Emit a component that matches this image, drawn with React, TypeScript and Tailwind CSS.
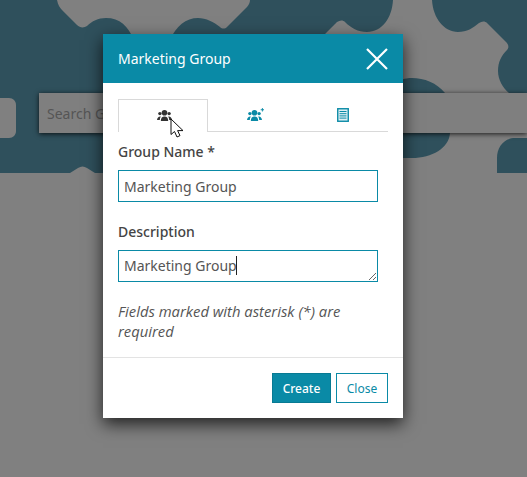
const font = { fontFamily: '"Noto Sans", "Open Sans", sans-serif' };

function Users({ color, plus }: { color: string; plus?: boolean }) {
  return (
    <svg width="18" height="14" viewBox="0 0 18 14" fill={color} className="block ml-[4px]">
      <circle cx="8.5" cy="4.8" r="2.8" />
      <circle cx="3.9" cy="5.6" r="1.7" />
      <circle cx="13.1" cy="5.6" r="1.7" />
      <path d="M1 12 C1.3 9.6 2.4 8.4 4.2 8.4 L4.8 8.4 C4.1 9.4 3.8 10.6 3.8 12 Z" />
      <path d="M16 12 C15.7 9.6 14.6 8.4 12.8 8.4 L12.2 8.4 C12.9 9.4 13.2 10.6 13.2 12 Z" />
      <path d="M4.8 13 C4.8 9.8 6.2 8.4 8.5 8.4 C10.8 8.4 12.2 9.8 12.2 13 Z" />
      {plus && <path d="M15.9 0 h0.9 v1.3 h1.2 v0.9 h-1.2 v1.3 h-0.9 v-1.3 h-1.2 v-0.9 h1.2 Z" />}
    </svg>
  );
}

function Doc() {
  return (
    <svg width="12" height="14" viewBox="0 0 12 14" className="block" fill="none" stroke="#0a8aa6">
      <rect x="0.75" y="0.75" width="10.5" height="12.5" strokeWidth="1.4" fill="#dff0f4" />
      <path d="M2.5 3.5h7M2.5 5.7h7M2.5 7.9h7M2.5 10.1h7" strokeWidth="1" />
    </svg>
  );
}

export default function App() {
  return (
    <div className="relative w-[527px] h-[477px] overflow-hidden bg-[#808080]" style={font}>
      <div className="relative h-[173px] bg-[#2f505c] pt-[93px] pl-[39px]">
        <svg width="527" height="173" viewBox="0 0 527 173" className="absolute left-0 top-0" fill="#808080">
          <path d="M57 0 C58 5 60 8 62 10 L77 25 C80 28 84 28 87 26 C92 21 98 18 106 18 C120 18 128 26 134 40 L170 40 C176 26 186 18 198 18 C206 18 214 22 220 27 C222 29 225 29 227 27 L247 7 C249 5 250 2 250 0 Z" />
          <path d="M325 34 L337 22 C340 20 343 20 345 22 C351 28 358 32 367 32 C382 32 392 18 393 0 L432 0 C433 18 444 32 458 32 C467 32 473 28 479 23 C482 21 485 21 487 23 L506 42 C509 45 509 48 507 50 C501 56 498 62 498 71 C498 80 503 88 509 93 L445 93 C437 83 424 78 412 78 C404 78 400 80 395 84 L395 60 L325 60 Z" />
          <path d="M0 98 L9 98 C13 98 16 101 16 105 L16 131 C16 135 13 138 9 138 L0 138 Z" />
          <path d="M70 173 L78 168 C81 166 84 166 87 168 L95 173 Z" />
          <path d="M450 133 L527 133 L527 138 L515 138 C504 138 497 147 497 158 L497 173 L400 173 L400 158 L412 158 C432 158 449 148 450 133 Z" />
        </svg>
        <div className="relative flex items-center h-10 pl-2 bg-[#7f7f7f] shadow-[0_1px_5px_rgba(0,0,0,0.8)] text-[#555555] text-[14px]">
          Search Groups
        </div>
      </div>

      <div className="absolute left-[103px] top-[34px] w-[300px] h-[384px] bg-white shadow-[0_6px_16px_rgba(0,0,0,0.75)] flex flex-col">
        <div className="flex items-center justify-between h-[49px] bg-[#0a8aa6] pl-[15px] pr-[15px] text-white text-[14px]">
          <span className="font-[450]">Marketing Group</span>
          <svg width="22" height="22" viewBox="0 0 22 22" stroke="white" strokeWidth="2.2" fill="none">
            <path d="M1 1 L21 21 M21 1 L1 21" />
          </svg>
        </div>

        <div className="flex flex-col flex-1 px-[15px] pt-4">
          <div className="flex h-[33px] w-[270px]">
            <div className="flex justify-center w-[90px] pt-[8px] border border-b-0 border-[#d9d9d9]">
              <Users color="#333333" />
            </div>
            <div className="flex justify-center w-[90px] pt-[9px] border-b border-[#d9d9d9]">
              <Users color="#0a8aa6" plus />
            </div>
            <div className="flex justify-center w-[90px] pt-[9px] border-b border-[#d9d9d9]">
              <Doc />
            </div>
          </div>

          <label className="mt-[10px] leading-[20px] text-[14px] font-medium text-[#444444]">Group Name *</label>
          <input
            readOnly
            defaultValue="Marketing Group"
            className="mt-[8px] w-[260px] h-[32px] px-[5px] border border-[#0a8aa6] text-[14px] text-[#555555] outline-none"
            style={font}
          />

          <label className="mt-[20px] leading-[20px] text-[14px] font-medium text-[#444444]">Description</label>
          <div className="relative mt-[8px] w-[260px] h-[32px]">
            <textarea
              readOnly
              defaultValue="Marketing Group"
              className="block w-[260px] h-[32px] px-[5px] py-[5px] border border-[#0a8aa6] text-[14px] leading-[20px] text-[#555555] outline-none"
              style={font}
            />
            <span className="absolute left-[118px] top-[6px] w-px h-[19px] bg-[#222222]" />
          </div>

          <p
            className="mt-[19px] w-[240px] text-[14.8px] leading-[20px] italic text-[#555555]"
            style={{ fontFamily: '"Open Sans", "Noto Sans", sans-serif' }}
          >
            Fields marked with asterisk (*) are required
          </p>
        </div>

        <div className="flex justify-end gap-[5px] h-[61px] pt-[15px] pr-[15px] border-t border-[#e3e3e3] text-[12px]">
          <button className="w-[59px] h-[30px] pt-px bg-[#0a8aa6] border border-[#087a93] text-white font-medium">Create</button>
          <button className="w-[52px] h-[30px] pt-px bg-white border border-[#0a8aa6] text-[#0a8aa6]">Close</button>
        </div>
      </div>

      <svg width="15" height="21" viewBox="0 0 15 21" className="absolute left-[170px] top-[118px]">
        <path d="M1 1 L1 16.5 L4.5 13.5 L7 19 L10 17.6 L7.6 12.6 L13 12.6 Z" fill="white" stroke="#111111" strokeWidth="1" strokeLinejoin="round" />
      </svg>
    </div>
  );
}
